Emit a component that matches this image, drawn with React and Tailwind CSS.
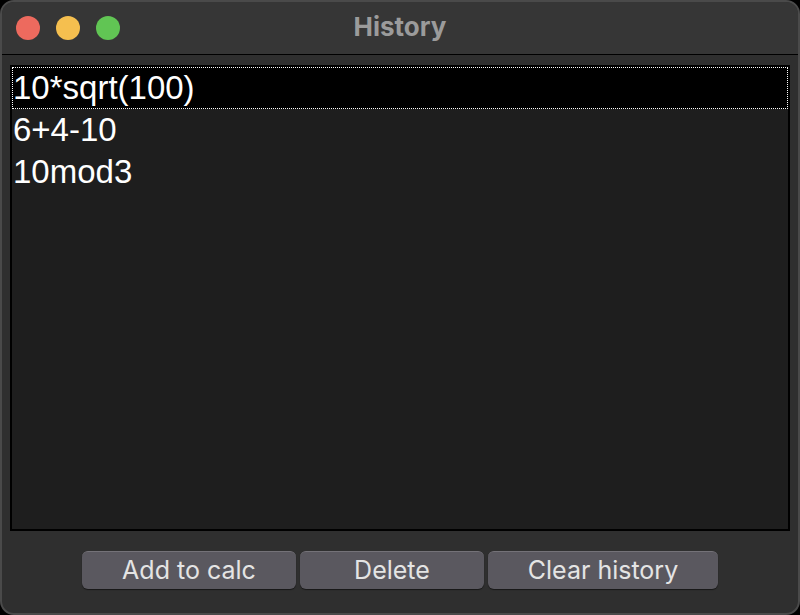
const items = ['10*sqrt(100)', '6+4-10', '10mod3']

const Light = ({ color }) => (
  <div className={`h-6 w-6 rounded-full ${color}`} />
)

const Button = ({ label, width }) => (
  <button
    className={`${width} h-[38px] rounded-[6px] border-t border-[#747278] bg-[#5a585f] text-[25px] leading-none text-[#e4e4e4] shadow-[0_1px_1px_rgba(0,0,0,0.5)]`}
    style={{ fontFamily: 'Inter, "Noto Sans", sans-serif' }}
  >
    {label}
  </button>
)

const App = () => {
  return (
    <div className="h-[615px] w-[800px] bg-black">
      <div className="flex h-full w-full flex-col overflow-hidden rounded-[14px] border-2 border-[#4a4a4a] bg-[#2f2f2f]">
        <div className="relative flex h-[52px] shrink-0 items-center bg-[#363636] pl-[14px]">
          <div className="flex gap-4">
            <Light color="bg-[#ed6a5e]" />
            <Light color="bg-[#f5bf4f]" />
            <Light color="bg-[#61c554]" />
          </div>
          <div
            className="absolute inset-x-0 top-0 flex h-full items-center justify-center pb-1 text-[26px] font-bold text-[#9b9b9b]"
            style={{ fontFamily: 'Inter, "Noto Sans", sans-serif' }}
          >
            History
          </div>
        </div>
        <div className="h-px shrink-0 bg-black" />
        <div className="flex flex-1 flex-col px-2 pt-[10px] pb-6">
          <div
            className="flex-1 border-2 border-black bg-[#1e1e1e] text-[33px] text-white"
            style={{ fontFamily: '"Liberation Sans", Arial, sans-serif' }}
          >
            {items.map((item, i) => (
              <div
                key={item}
                className={`h-[42px] leading-[40px] ${i === 0 ? 'border border-dotted border-white bg-black' : 'border border-transparent'}`}
              >
                {item}
              </div>
            ))}
          </div>
          <div className="mt-5 flex justify-center gap-1">
            <Button label="Add to calc" width="w-[214px]" />
            <Button label="Delete" width="w-[184px]" />
            <Button label="Clear history" width="w-[230px]" />
          </div>
        </div>
      </div>
    </div>
  )
}

export default App
